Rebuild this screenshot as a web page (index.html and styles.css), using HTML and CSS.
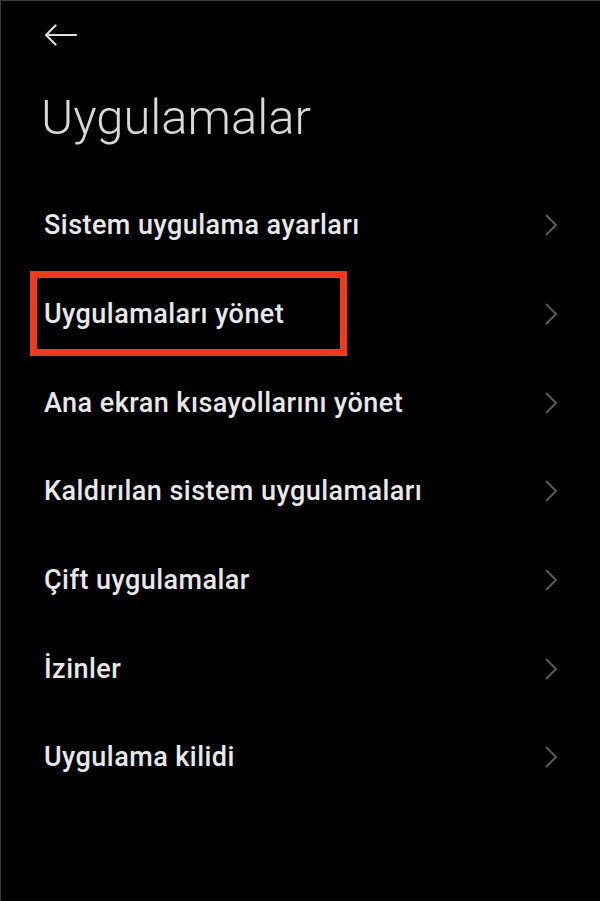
FILE: index.html
```html
<!DOCTYPE html>
<html lang="tr">
<head>
<meta charset="utf-8">
<title>Uygulamalar</title>
<link rel="stylesheet" href="styles.css">
</head>
<body>
<div class="screen">
  <header class="topbar">
    <svg class="back" width="34" height="22" viewBox="0 0 34 22" aria-hidden="true">
      <path d="M2 11H32M11.5 1.5L2 11l9.5 9.5" fill="none" stroke="#dcdcdc" stroke-width="2.2" stroke-linecap="round" stroke-linejoin="round"/>
    </svg>
  </header>
  <h1 class="title">Uygulamalar</h1>
  <ul class="list">
    <li class="row"><span class="label">Sistem uygulama ayarları</span><svg class="chev" width="14" height="24" viewBox="0 0 14 24"><path d="M2 2l10 10L2 22" fill="none" stroke="#5a5a5a" stroke-width="2"/></svg></li>
    <li class="row highlighted"><span class="label">Uygulamaları yönet</span><svg class="chev" width="14" height="24" viewBox="0 0 14 24"><path d="M2 2l10 10L2 22" fill="none" stroke="#5a5a5a" stroke-width="2"/></svg><span class="mark"></span></li>
    <li class="row"><span class="label">Ana ekran kısayollarını yönet</span><svg class="chev" width="14" height="24" viewBox="0 0 14 24"><path d="M2 2l10 10L2 22" fill="none" stroke="#5a5a5a" stroke-width="2"/></svg></li>
    <li class="row"><span class="label">Kaldırılan sistem uygulamaları</span><svg class="chev" width="14" height="24" viewBox="0 0 14 24"><path d="M2 2l10 10L2 22" fill="none" stroke="#5a5a5a" stroke-width="2"/></svg></li>
    <li class="row"><span class="label">Çift uygulamalar</span><svg class="chev" width="14" height="24" viewBox="0 0 14 24"><path d="M2 2l10 10L2 22" fill="none" stroke="#5a5a5a" stroke-width="2"/></svg></li>
    <li class="row"><span class="label">İzinler</span><svg class="chev" width="14" height="24" viewBox="0 0 14 24"><path d="M2 2l10 10L2 22" fill="none" stroke="#5a5a5a" stroke-width="2"/></svg></li>
    <li class="row"><span class="label">Uygulama kilidi</span><svg class="chev" width="14" height="24" viewBox="0 0 14 24"><path d="M2 2l10 10L2 22" fill="none" stroke="#5a5a5a" stroke-width="2"/></svg></li>
  </ul>
</div>
</body>
</html>
```
FILE: styles.css
```css
html, body {
  margin: 0;
  padding: 0;
  background: #000;
}
body {
  font-family: Roboto, "Noto Sans", "Liberation Sans", sans-serif;
  color: #ececec;
}
.screen {
  width: 600px;
  height: 901px;
  box-sizing: border-box;
  border-top: 1px solid #3a3a3a;
  border-left: 1px solid #3a3a3a;
  overflow: hidden;
}
.topbar {
  height: 67px;
  display: flex;
  align-items: center;
  padding-left: 43px;
}
.back {
  display: block;
}
.title {
  margin: 20px 0 0 40px;
  font-size: 49px;
  line-height: 60px;
  font-weight: 300;
  color: #d9d9d9;
  letter-spacing: 0;
}
.list {
  list-style: none;
  margin: 33px 0 0 0;
  padding: 0;
}
.row {
  position: relative;
  height: 88.67px;
  display: flex;
  align-items: center;
  justify-content: space-between;
  padding: 0 42px 0 43px;
}
.label {
  font-size: 27px;
  font-weight: 500;
  letter-spacing: 0.45px;
  color: #e8e8e8;
}
.chev {
  display: block;
}
.mark {
  position: absolute;
  left: 29px;
  top: 1px;
  width: 317px;
  height: 85px;
  box-sizing: border-box;
  border: 7px solid #ee3b1d;
}
```
